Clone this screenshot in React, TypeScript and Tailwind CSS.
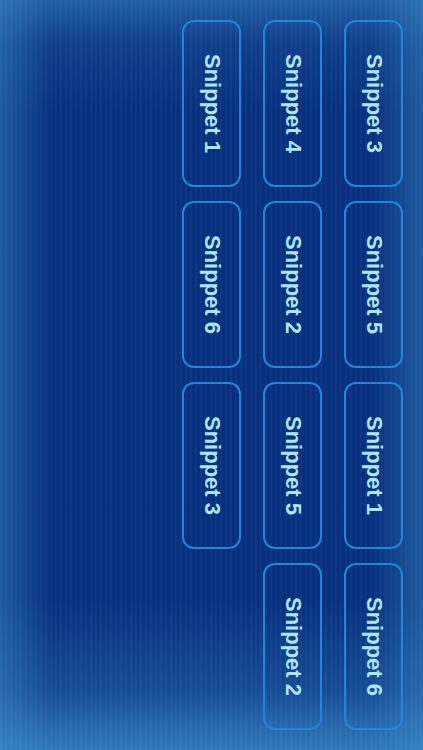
const columns = [
  ["Snippet 3", "Snippet 5", "Snippet 1", "Snippet 6"],
  ["Snippet 4", "Snippet 2", "Snippet 5", "Snippet 2"],
  ["Snippet 1", "Snippet 6", "Snippet 3"],
];

function SnippetButton({ label }: { label: string }) {
  return (
    <button className="flex h-[167px] w-[59px] items-center justify-center rounded-[12px] border-2 border-[#2584d4] bg-transparent">
      <span className="font-['Liberation_Sans',Arial,sans-serif] text-[22px] font-bold leading-none text-[#aee6ff] [writing-mode:vertical-rl]">
        {label}
      </span>
    </button>
  );
}

export default function App() {
  return (
    <div className="h-[750px] w-[423px] overflow-hidden bg-[#06307e] bg-[repeating-linear-gradient(90deg,rgba(255,255,255,0.03)_0px,rgba(255,255,255,0.03)_2px,transparent_2px,transparent_5px),linear-gradient(to_bottom,rgba(58,140,200,0.5)_0%,rgba(58,140,200,0.15)_6%,rgba(58,140,200,0)_15%,rgba(58,140,200,0)_80%,rgba(58,140,200,0.3)_92%,rgba(58,140,200,0.8)_100%),linear-gradient(to_right,rgba(58,140,200,0.45)_0%,rgba(58,140,200,0)_12%,rgba(58,140,200,0)_88%,rgba(58,140,200,0.45)_100%)]">
      <div className="flex flex-row-reverse gap-[22px] pr-[20px] pt-[20px]">
        {columns.map((col, i) => (
          <div key={i} className="flex flex-col gap-[14px]">
            {col.map((label, j) => (
              <SnippetButton key={j} label={label} />
            ))}
          </div>
        ))}
      </div>
    </div>
  );
}
